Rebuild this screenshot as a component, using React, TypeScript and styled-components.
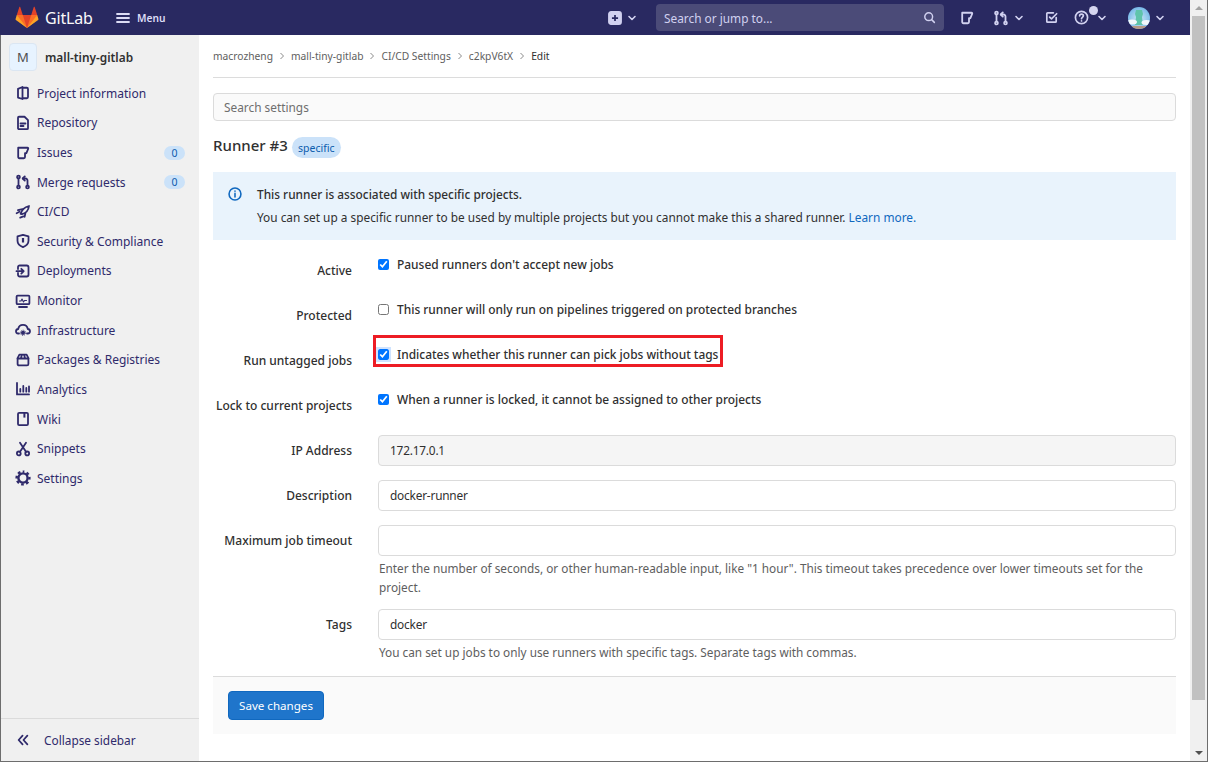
import React from 'react';
import styled, { createGlobalStyle } from 'styled-components';

const Global = createGlobalStyle`
  html, body { margin: 0; padding: 0; background: #fff; }
  body { font-family: "Noto Sans", "Liberation Sans", sans-serif; font-size: 11.85px; color: #303030; overflow: hidden; }
  * { box-sizing: border-box; }
`;

const Frame = styled.div`
  width: 1208px; height: 762px; display: flex; border-bottom: 1px solid #6d6d6d; border-right: 1px solid #6d6d6d; overflow: hidden;
`;
const Main = styled.div`flex: 1; min-width: 0; display: flex; flex-direction: column;`;
const Navbar = styled.header`
  height: 35px; flex: none; background: #292961; display: flex; align-items: center; color: #fff; padding-left: 15px;
`;
const Logo = styled.div`display: flex; align-items: center; gap: 6px; width: 100px;`;
const Wordmark = styled.span`font-size: 16px; letter-spacing: -0.2px; color: #fafafa; line-height: 22px;`;
const MenuBtn = styled.div`display: flex; align-items: center; gap: 6px; font-size: 10.2px; font-weight: 600; width: 493px; color: #dcdcf5;`;
const NavIcon = styled.span<{ $w: number; $gap?: number }>`
  position: relative; width: ${p => p.$w}px; display: flex; align-items: center; gap: ${p => p.$gap ?? 5}px; flex: none; color: #d1d1f0;
`;
const SearchBox = styled.div`
  width: 288px; height: 27px; border-radius: 4px; background: #4b4b78; display: flex; align-items: center; justify-content: space-between;
  padding: 0 8px; color: #d1d1f0; font-size: 11.85px; margin: 0 15px 0 9px; flex: none;
`;
const Dot = styled.span`position: absolute; left: 15px; top: -4px; width: 9px; height: 9px; border-radius: 50%; background: #d5d5ef;`;
const Body = styled.div`flex: 1; min-height: 0; display: flex;`;
const Sidebar = styled.aside`
  width: 199px; flex: none; background: #f0f0f0; border-left: 1px solid #6d6d6d; display: flex; flex-direction: column; color: #2f2a6b;
`;
const Context = styled.div`display: flex; align-items: center; gap: 8px; padding: 0 0 0 8px; height: 43.5px; font-weight: 600; color: #303030;`;
const ContextAvatar = styled.div`
  width: 28px; height: 28px; border-radius: 4px; background: #e7f3ff; border: 1px solid #dbe6f2; display: flex; align-items: center; justify-content: center;
  font-weight: 400; font-size: 13px; color: #4f4f4f;
`;
const Nav = styled.nav`flex: 1;`;
const NavRow = styled.div`
  height: 29.62px; display: flex; align-items: center; padding: 0 14px 0 14px; gap: 6px; font-size: 12px; letter-spacing: -0.01px;
`;
const NavLabel = styled.span`flex: 1; white-space: nowrap;`;
const Count = styled.span`
  width: 21px; height: 14px; border-radius: 7px; background: #cbe2f9; color: #0b5cad; font-size: 10.5px; display: flex; align-items: center; justify-content: center;
`;
const Collapse = styled.div`
  height: 43px; border-top: 1px solid #dbdbdb; display: flex; align-items: center; padding-left: 15px; gap: 14px; font-size: 11.85px;
`;
const Content = styled.main`flex: 1; min-width: 0; padding: 0 14px; background: #fff;`;
const Crumbs = styled.div`
  height: 43px; border-bottom: 1px solid #dcdcdc; display: flex; align-items: center; font-size: 10.25px; color: #5e5e5e; padding-bottom: 1px;
`;
const Crumb = styled.span<{ $current?: boolean }>`color: ${p => (p.$current ? '#303030' : '#5e5e5e')};`;
const CrumbSep = styled.span`margin: 0 5px; display: flex;`;
const SearchSettings = styled.input`
  display: block; width: 100%; height: 28px; margin-top: 15px; border: 1px solid #dbdbdb; border-radius: 4px; background: #fafafa; padding: 0 10px;
  font: inherit; color: #303030; outline: none;
  &::placeholder { color: #6e6e6e; opacity: 1; }
`;
const TitleRow = styled.div`display: flex; align-items: flex-start; gap: 4px; height: 21px; margin-top: 14px;`;
const Title = styled.h1`margin: 0; font-size: 15px; font-weight: 500; line-height: 21px; color: #303030;`;
const Pill = styled.span`
  margin-top: 2px; height: 21px; width: 49px; border-radius: 11px; background: #cbe2f9; color: #0b5cad; font-size: 10.5px; display: flex; align-items: center; justify-content: center;
`;
const Alert = styled.section`
  margin-top: 16px; height: 68px; background: #e9f3fc; display: flex; padding: 11px 0 0 15px; gap: 15px; line-height: 23px;
`;
const AlertIcon = styled.span`display: flex; flex: none; margin-top: 4px;`;
const AlertHead = styled.div`font-weight: 500; color: #303030;`;
const Link = styled.a`color: #1068bf;`;
const Form = styled.div`padding-top: 15px;`;
const Row = styled.div<{ $h?: number }>`
  display: grid; grid-template-columns: 139px 1fr; column-gap: 26px; height: ${p => p.$h ?? 45}px;
`;
const Label = styled.label`
  display: block; text-align: right; padding-top: 6px; line-height: 20px; font-size: 12px; font-weight: 500; white-space: nowrap; color: #303030;
`;
const Check = styled.div`position: relative; display: flex; align-items: center; gap: 8px; height: 20px; font-size: 11.95px; font-weight: 500; margin-top: -1px;`;
const Box = styled.input<{ $focus?: boolean }>`
  margin: 0; width: 11px; height: 11px; flex: none; ${p => (p.$focus ? 'box-shadow: 0 0 0 2px #cfe3ff;' : '')}
`;
const Highlight = styled.div`
  position: absolute; left: -5px; top: -9px; width: 350px; height: 32px; border: 3px solid #ed1c24; pointer-events: none;
`;
const Field = styled.input<{ $muted?: boolean }>`
  display: block; width: 100%; height: 31px; border: 1px solid #dbdbdb; border-radius: 4px; padding: 0 11px 1px; font: inherit; letter-spacing: -0.2px; color: #303030;
  background: ${p => (p.$muted ? '#f5f5f5' : '#fff')}; outline: none;
`;
const Help = styled.p`margin: 3px 0 0; padding-left: 1px; font-size: 11.8px; line-height: 19px; color: #5e5e5e;`;
const Footer = styled.div`
  height: 58px; background: #fafafa; border-top: 1px solid #dbdbdb; padding: 14px 15px 0;
`;
const Save = styled.button`
  width: 96px; height: 29px; border: 1px solid #1068bf; border-radius: 4px; background: #1f75cb; color: #fff; font: inherit; font-size: 11.6px; padding: 0;
`;
const Scrollbar = styled.div`
  width: 17px; flex: none; background: #f0f0f0; display: flex; flex-direction: column; align-items: center; position: relative;
`;
const ArrowBox = styled.div`height: 16px; flex: none; display: flex; align-items: center; justify-content: center;`;
const Up = styled.div`width: 0; height: 0; border: 4px solid transparent; border-top: 0; border-bottom: 4px solid #a3a3a3;`;
const Down = styled.div`width: 0; height: 0; border: 4px solid transparent; border-bottom: 0; border-top: 4px solid #505050;`;
const Thumb = styled.div`width: 13px; height: 684px; flex: none; background: #c1c1c1;`;
const Spacer = styled.div`flex: 1;`;

const S = ({ children, size = 16, color = 'currentColor', sw = 1.8 }: { children: React.ReactNode; size?: number; color?: string; sw?: number }) => (
  <svg width={size} height={size} viewBox="0 0 16 16" fill="none" stroke={color} strokeWidth={sw} strokeLinecap="round" strokeLinejoin="round" style={{ flex: 'none', display: 'block' }}>
    {children}
  </svg>
);

const Tanuki = () => (
  <svg width="24" height="23" viewBox="0 0 36 36">
    <path fill="#e24329" d="M2 14l9.38 9v-9l-4-12.28c-.205-.632-1.176-.632-1.38 0z" />
    <path fill="#e24329" d="M34 14l-9.38 9v-9l4-12.28c.205-.632 1.176-.632 1.38 0z" />
    <path fill="#e24329" d="M18,34.38 3,14 33,14 Z" />
    <path fill="#fc6d26" d="M18,34.38 11.38,14 2,14 6,25Z" />
    <path fill="#fc6d26" d="M18,34.38 24.62,14 34,14 30,25Z" />
    <path fill="#fca326" d="M2 14L.1 20.16c-.18.565 0 1.2.5 1.56l17.42 12.66z" />
    <path fill="#fca326" d="M34 14l1.9 6.16c.18.565 0 1.2-.5 1.56L18 34.38z" />
  </svg>
);

const IssueI = () => <S><path d="M3.2 2.75h9.3c.6 0 .9.5.7 1l-1.7 4.1c-.1.3-.3.4-.6.4H10V12c0 .7-.5 1.25-1.2 1.25H4.4c-.7 0-1.2-.55-1.2-1.25z" /></S>;
const MrI = () => (
  <S>
    <circle cx="3.5" cy="3" r="1.4" /><circle cx="3.5" cy="13" r="1.4" /><path d="M3.5 4.5v7" />
    <circle cx="12.5" cy="13" r="1.4" /><path d="M12.5 11.5V6.5c0-1.2-.8-2-2-2H8" /><path d="M9.8 2.4 7.7 4.5l2.1 2.1" />
  </S>
);
const icons: Record<string, React.ReactNode> = {
  project: <S><path d="M3 3.8 7.5 2v12L3 12.6z" /><path d="M7.5 2.75h4.3c.7 0 1.2.5 1.2 1.2v8.1c0 .7-.5 1.2-1.2 1.2H7.5" /></S>,
  repo: <S><path d="M3 2.75c0-.55.45-1 1-1h5.5L13 5.2v8c0 .55-.45 1-1 1H4c-.55 0-1-.45-1-1z" /><path d="M5.5 8.5h5M5.5 11h3" /></S>,
  issues: <IssueI />,
  mr: <MrI />,
  ci: (
    <S>
      <path d="M5.6 9.8C6.6 6.2 9.6 3.2 14 2c-.6 4.4-3.6 7.4-7 8.2z" />
      <path d="M7.4 5.2 3 6.2M1.6 9.2l2.8-1.4M10.4 9.2l-.8 3.6M5.2 13.6l3.2-1.2" />
    </S>
  ),
  shield: <S><path d="M2.5 3.4 8 1.8l5.5 1.6v4.4c0 3-2.2 5-5.5 6.4-3.3-1.400-5.500-3.400-5.500-6.400z" /><path d="M8 5v4.500" strokeWidth="2.2" strokeLinecap="butt" /></S>,
  deploy: <S><path d="M3 6V4.2C3 3.200 3.800 2.500 4.700 2.500h7c1 0 1.800.7 1.800 1.700v7.600c0 1-.8 1.700-1.800 1.700h-7C3.800 13.500 3 12.800 3 11.800V10" /><path d="M1.500 8.200h7M6.300 5.800l2.400 2.400-2.400 2.400" /></S>,
  monitor: (
    <S>
      <rect x="1.6" y="2.6" width="12.8" height="8.6" rx="1" />
      <path d="M4 14h8" />
      <path d="M4.5 8h1.500l1-2 1.500 3 1-1.500h2" strokeWidth="1.1" />
    </S>
  ),
  infra: (
    <S>
      <path d="M4 11.500H3.200C1.900 11.500 1 10.500 1 9.300 1 8 2 7.100 3.200 7 3.600 4.600 5.600 2.800 8 2.800s4.400 1.800 4.800 4.200c1.200.1 2.200 1 2.200 2.300 0 1.200-.9 2.200-2.200 2.200H12" />
      <circle cx="8" cy="10.8" r="2.1" fill="currentColor" stroke="none" />
      <circle cx="8" cy="10.8" r="2.6" strokeDasharray="1 1.05" strokeWidth="1" strokeLinecap="butt" />
    </S>
  ),
  pkg: <S><path d="M2.600 6.200 4.400 2.600h7.200l1.800 3.600V12c0 .8-.6 1.400-1.400 1.400H4c-.8 0-1.400-.6-1.400-1.400z" /><path d="M2.600 6.500h10.800M6 6.200 6.800 2.800M10 6.200 9.200 2.800" /></S>,
  chart: <S><path d="M2 2v11.400h12" /><path d="M5.300 8v2.700M8.300 5v5.700M11.300 7v3.700M14 5.500v5.200" /></S>,
  wiki: <S><rect x="3" y="1.8" width="10" height="12.4" rx="1.2" /><path d="M9.400 2v4.600" strokeWidth="2" strokeLinecap="butt" /></S>,
  snippet: <S><circle cx="3.8" cy="12.4" r="1.9" /><circle cx="12.2" cy="12.4" r="1.9" /><path d="M5 10.800 11 1.800M11 10.800 5 1.800" strokeWidth="1.8" /></S>,
  settings: (
    <S>
      <circle cx="8" cy="8" r="4.6" strokeWidth="2.4" />
      <circle cx="8" cy="8" r="6.4" strokeWidth="2.4" strokeDasharray="2.7 2.33" strokeDashoffset="1.35" strokeLinecap="butt" transform="rotate(-90 8 8)" />
    </S>
  ),
};

const Chevron = ({ size = 10 }: { size?: number }) => (
  <svg width={size} height={size} viewBox="0 0 10 10" fill="none" stroke="currentColor" strokeWidth="1.6" strokeLinecap="round" strokeLinejoin="round" style={{ display: 'block', flex: 'none' }}>
    <path d="M2 3.500 5 6.500 8 3.500" />
  </svg>
);

const CrumbChevron = () => (
  <svg width="8" height="8" viewBox="0 0 8 8" fill="none" stroke="#8a8a8a" strokeWidth="1" style={{ display: 'block' }}>
    <path d="M2.500 1 5.500 4 2.500 7" />
  </svg>
);

const Avatar = () => (
  <svg width="22" height="22" viewBox="0 0 22 22" style={{ display: 'block', flex: 'none' }}>
    <defs>
      <clipPath id="av"><circle cx="11" cy="11" r="11" /></clipPath>
      <radialGradient id="sky" cx="50%" cy="55%" r="60%"><stop offset="0" stopColor="#cfeaf7" /><stop offset="1" stopColor="#6fb4e6" /></radialGradient>
    </defs>
    <g clipPath="url(#av)">
      <rect width="22" height="22" fill="url(#sky)" />
      <path d="M8 3h6l1 4-1 3 1 8H7l1-8-1-3z" fill="#5fc4ab" />
      <ellipse cx="4" cy="15" rx="5" ry="2.5" fill="#f1f7fb" />
      <ellipse cx="18.5" cy="15.5" rx="5" ry="2.5" fill="#f1f7fb" />
      <rect x="4" y="19" width="14" height="3" fill="#b79a86" />
    </g>
  </svg>
);

const navItems: { icon: string; label: string; count?: number }[] = [
  { icon: 'project', label: 'Project information' },
  { icon: 'repo', label: 'Repository' },
  { icon: 'issues', label: 'Issues', count: 0 },
  { icon: 'mr', label: 'Merge requests', count: 0 },
  { icon: 'ci', label: 'CI/CD' },
  { icon: 'shield', label: 'Security & Compliance' },
  { icon: 'deploy', label: 'Deployments' },
  { icon: 'monitor', label: 'Monitor' },
  { icon: 'infra', label: 'Infrastructure' },
  { icon: 'pkg', label: 'Packages & Registries' },
  { icon: 'chart', label: 'Analytics' },
  { icon: 'wiki', label: 'Wiki' },
  { icon: 'snippet', label: 'Snippets' },
  { icon: 'settings', label: 'Settings' },
];

const crumbs = ['macrozheng', 'mall-tiny-gitlab', 'CI/CD Settings', 'c2kpV6tX'];

const checks = [
  { label: 'Active', text: "Paused runners don't accept new jobs", on: true },
  { label: 'Protected', text: 'This runner will only run on pipelines triggered on protected branches', on: false },
  { label: 'Run untagged jobs', text: 'Indicates whether this runner can pick jobs without tags', on: true, mark: true },
  { label: 'Lock to current projects', text: 'When a runner is locked, it cannot be assigned to other projects', on: true },
];

export default function App() {
  return (
    <Frame>
      <Global />
      <Main>
        <Navbar>
          <Logo><Tanuki /><Wordmark>GitLab</Wordmark></Logo>
          <MenuBtn>
            <S size={16}><path d="M2 4h12M2 8h12M2 12h12" /></S>
            Menu
          </MenuBtn>
          <NavIcon $w={39}>
            <S size={14}><rect x="1" y="1" width="14" height="14" rx="2.5" fill="currentColor" /><path d="M8 4.5v7M4.5 8h7" stroke="#292961" strokeWidth="2" strokeLinecap="butt" /></S>
            <Chevron />
          </NavIcon>
          <SearchBox>
            Search or jump to...
            <S size={13}><circle cx="7" cy="7" r="4.8" /><path d="M10.6 10.6 14 14" /></S>
          </SearchBox>
          <NavIcon $w={34}><IssueI /></NavIcon>
          <NavIcon $w={51}><MrI /><Chevron /></NavIcon>
          <NavIcon $w={29.5}>
            <S size={15}><path d="M13 8v4.200c0 .5-.4.8-.8.8H3.800c-.5 0-.8-.3-.8-.8V3.800c0-.5.3-.8.8-.8H10" /><path d="m6 7.500 2 2 5.500-5.500" /></S>
          </NavIcon>
          <NavIcon $w={54.5} $gap={8.5}>
            <S size={15}><circle cx="8" cy="8" r="6.5" /><path d="M6 6.200C6 5 6.900 4.400 8 4.400c1.200 0 2 .7 2 1.800 0 1.500-2 1.700-2 3.100" /><path d="M8 11.500v.1" strokeWidth="1.8" /></S>
            <Dot />
            <Chevron />
          </NavIcon>
          <NavIcon $w={40}><Avatar /><Chevron /></NavIcon>
        </Navbar>
        <Body>
          <Sidebar>
            <Context>
              <ContextAvatar>M</ContextAvatar>
              mall-tiny-gitlab
            </Context>
            <Nav>
              {navItems.map(n => (
                <NavRow key={n.label}>
                  {icons[n.icon]}
                  <NavLabel>{n.label}</NavLabel>
                  {n.count !== undefined && <Count>{n.count}</Count>}
                </NavRow>
              ))}
            </Nav>
            <Collapse>
              <S size={14}><path d="M7.500 3 3 8l4.500 5M13 3 8.500 8l4.500 5" strokeWidth="2" /></S>
              Collapse sidebar
            </Collapse>
          </Sidebar>
          <Content>
            <Crumbs>
              {crumbs.map(c => (
                <React.Fragment key={c}>
                  <Crumb>{c}</Crumb>
                  <CrumbSep><CrumbChevron /></CrumbSep>
                </React.Fragment>
              ))}
              <Crumb $current>Edit</Crumb>
            </Crumbs>
            <SearchSettings placeholder="Search settings" />
            <TitleRow><Title>Runner #3</Title><Pill>specific</Pill></TitleRow>
            <Alert>
              <AlertIcon>
                <S size={14} color="#1068bf"><circle cx="8" cy="8" r="6.8" /><path d="M8 7.300v4M8 4.500v.3" strokeWidth="1.8" /></S>
              </AlertIcon>
              <div>
                <AlertHead>This runner is associated with specific projects.</AlertHead>
                <div>You can set up a specific runner to be used by multiple projects but you cannot make this a shared runner. <Link>Learn more.</Link></div>
              </div>
            </Alert>
            <Form>
              {checks.map(c => (
                <Row key={c.label}>
                  <Label>{c.label}</Label>
                  <Check>
                    <Box type="checkbox" defaultChecked={c.on} $focus={c.mark} />
                    {c.text}
                    {c.mark && <Highlight />}
                  </Check>
                </Row>
              ))}
              <Row><Label>IP Address</Label><Field $muted readOnly defaultValue="172.17.0.1" /></Row>
              <Row><Label>Description</Label><Field defaultValue="docker-runner" /></Row>
              <Row $h={84}>
                <Label>Maximum job timeout</Label>
                <div>
                  <Field />
                  <Help>Enter the number of seconds, or other human-readable input, like "1 hour". This timeout takes precedence over lower timeouts set for the project.</Help>
                </div>
              </Row>
              <Row $h={67}>
                <Label>Tags</Label>
                <div>
                  <Field defaultValue="docker" />
                  <Help>You can set up jobs to only use runners with specific tags. Separate tags with commas.</Help>
                </div>
              </Row>
            </Form>
            <Footer><Save>Save changes</Save></Footer>
          </Content>
        </Body>
      </Main>
      <Scrollbar>
        <ArrowBox><Up /></ArrowBox>
        <Thumb />
        <Spacer />
        <ArrowBox><Down /></ArrowBox>
      </Scrollbar>
    </Frame>
  );
}
